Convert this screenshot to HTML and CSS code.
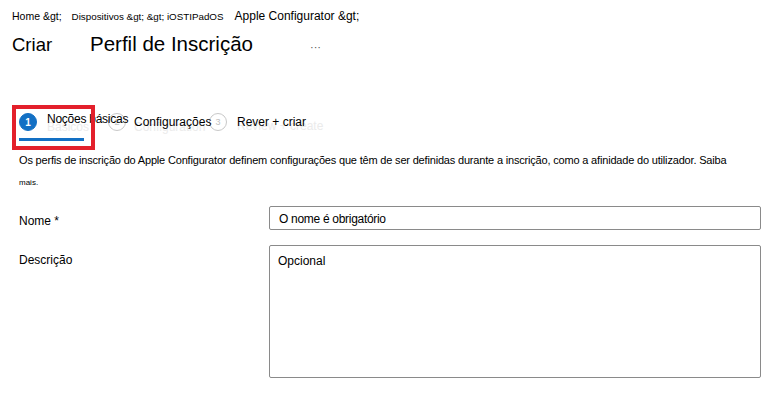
FILE: index.html
```html
<!DOCTYPE html>
<html lang="pt">
<head>
<meta charset="utf-8">
<title>Perfil de Inscrição</title>
<link rel="stylesheet" href="styles.css">
</head>
<body>
<div class="page">
  <nav class="crumbs">
    <span class="crumb-home">Home &amp;gt;</span>
    <span class="crumb-dev">Dispositivos &amp;gt; &amp;gt; iOSTIPadOS</span>
    <span class="crumb-apple">Apple Configurator &amp;gt;</span>
  </nav>
  <header class="title-row">
    <span class="title-create">Criar</span>
    <span class="title-main">Perfil de Inscrição</span>
    <span class="title-more">···</span>
  </header>
  <div class="steps">
    <div class="highlight"></div>
    <div class="step step-active">
      <span class="circle circle-active">1</span>
      <span class="label label-1"><span class="ghost">Básicos</span><span class="real">Noções básicas</span></span>
      <span class="underline"></span>
    </div>
    <div class="step">
      <span class="circle">2</span>
      <span class="label label-2"><span class="ghost">Configuration</span><span class="real">Configurações</span></span>
    </div>
    <div class="step">
      <span class="circle">3</span>
      <span class="label label-3"><span class="ghost">Review + create</span><span class="real">Rever + criar</span></span>
    </div>
  </div>
  <p class="intro">Os perfis de inscrição do Apple Configurator definem configurações que têm de ser definidas durante a inscrição, como a afinidade do utilizador. Saiba <span class="more">mais.</span></p>
  <div class="form">
    <label class="field-label">Nome *</label>
    <div class="input">O nome é obrigatório</div>
    <label class="field-label">Descrição</label>
    <div class="textarea">Opcional</div>
  </div>
</div>
</body>
</html>
```
FILE: styles.css
```css
* { box-sizing: border-box; }
html, body { margin: 0; padding: 0; background: #fff; }
body { font-family: "Liberation Sans", Arial, sans-serif; color: #000; }
.page { width: 775px; height: 395px; overflow: hidden; }

.crumbs { display: flex; align-items: baseline; padding: 9px 0 0 12px; height: 28px; }
.crumb-home { font-size: 10.5px; margin-right: 10px; }
.crumb-dev { font-size: 9.8px; margin-right: 11px; }
.crumb-apple { font-size: 12px; }

.title-row { display: flex; align-items: baseline; padding-left: 12px; height: 40px; padding-top: 4px; }
.title-create { font-size: 18.5px; width: 78px; }
.title-main { font-size: 20.5px; width: 220px; }
.title-more { font-size: 11px; color: #555; }

.steps { position: relative; display: flex; align-items: center; padding: 34px 0 0 19px; height: 74px; }
.highlight { position: absolute; left: 12px; top: 37px; width: 83px; height: 45px; border: 4px solid #e3202b; pointer-events: none; z-index: 2; }
.step { position: relative; display: flex; align-items: center; height: 18px; }
.circle { width: 18px; height: 18px; border-radius: 50%; border: 1px solid #c8c8c8; color: #c0c0c0; font-size: 9px; display: flex; align-items: center; justify-content: center; flex: none; background: #fff; position: relative; z-index: 0; }
.circle-active { background: #1370c4; border-color: #1370c4; color: #fff; font-weight: bold; font-size: 10px; }
.label { position: relative; display: block; font-size: 12px; line-height: 14px; white-space: nowrap; }
.label-1 { margin-left: 10px; width: 61px; }
.label-1 .real { letter-spacing: -0.25px; }
.label-2 { margin-left: 8px; width: 75px; }
.label-3 { margin-left: 10px; }
.ghost { color: #ebebeb; display: block; position: relative; top: 5px; }
.real { position: absolute; left: 0; top: -3px; color: #000; z-index: 1; }
.label-2 .real, .label-3 .real { top: 0; }
.label-3 .ghost { top: 4px; }
.underline { position: absolute; left: 0; bottom: -10px; width: 65px; height: 3px; background: #1370c4; }

.intro { margin: 0; padding: 7px 10px 0 19px; font-size: 11px; line-height: 22px; letter-spacing: -0.18px; height: 64px; }
.more { font-size: 8px; display: block; line-height: 14px; padding-top: 5px; letter-spacing: 0; }

.form { display: grid; grid-template-columns: 250px 492px; row-gap: 15px; padding-left: 19px; }
.field-label { font-size: 12px; padding-top: 8px; }
.input { height: 24px; border: 1px solid #8a8a8a; border-radius: 2px; font-size: 12px; padding: 5px 9px; letter-spacing: -0.3px; }
.textarea { height: 133px; border: 1px solid #8a8a8a; border-radius: 2px; font-size: 12px; padding: 8px 8px; }
```
